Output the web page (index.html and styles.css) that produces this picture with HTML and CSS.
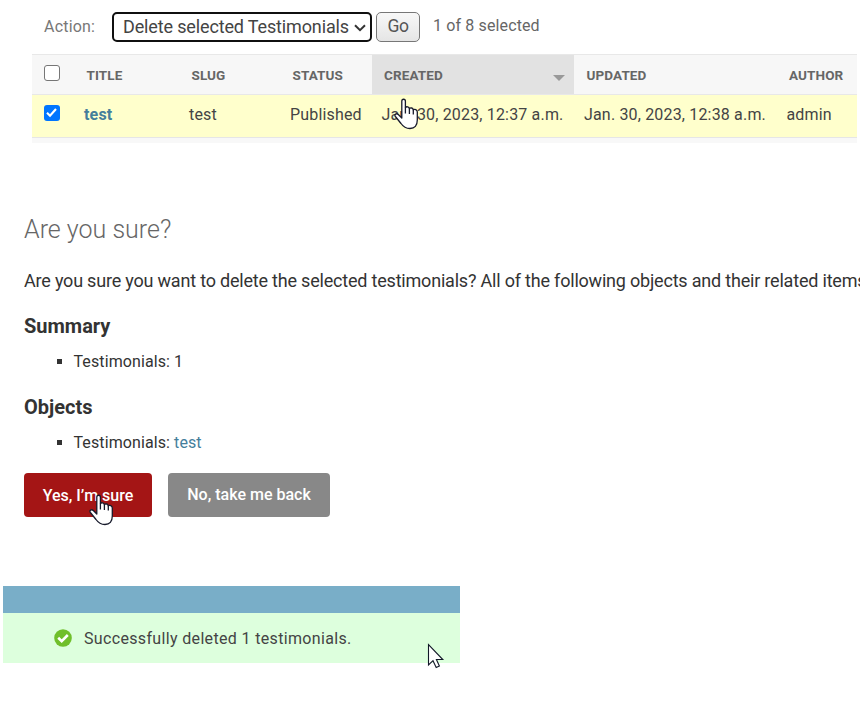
FILE: index.html
```html
<!DOCTYPE html>
<html lang="en">
<head>
<meta charset="utf-8">
<title>Delete testimonials</title>
<link rel="stylesheet" href="styles.css">
</head>
<body>
<svg width="0" height="0" class="defs">
  <symbol id="hand" viewBox="0 0 26 32">
    <path d="M7.8 20V3.2C7.8.6 11.4.6 11.4 3.2V9.6C12.2 8.3 15.2 8.5 15.4 10.6C16.5 9.4 19 9.8 19.3 11.8C20.6 10.8 23.3 11.6 23.3 14V22C23.3 27.3 20.6 30.5 16 30.5C11.5 30.5 9.3 28.8 7 25.5L1.4 18.5C-.2 16.4 2.6 14.9 4.3 16.5Z" fill="#fff" stroke="#171a2b" stroke-width="1.3" stroke-linejoin="round"/>
    <path d="M11.4 9.5V15.5M15.4 10.5V16M19.3 11.8V16.5" fill="none" stroke="#171a2b" stroke-width="1.3"/>
  </symbol>
</svg>
<section class="changelist">
  <div class="actions">
    <span class="label">Action:</span>
    <div class="select"><span>Delete selected Testimonials</span>
      <svg width="12" height="8" viewBox="0 0 12 8"><path d="M1 1.3L6 6.2L11 1.3" fill="none" stroke="#333" stroke-width="2"/></svg>
    </div>
    <button class="go">Go</button>
    <span class="counter">1 of 8 selected</span>
  </div>
  <table>
    <colgroup><col class="c-check"><col class="c-title"><col class="c-slug"><col class="c-status"><col class="c-date"><col class="c-date"><col class="c-author"></colgroup>
    <thead><tr><th class="check"><span class="box"></span></th><th>TITLE</th><th>SLUG</th><th>STATUS</th><th class="sorted"><div><span>CREATED</span><i></i></div></th><th>UPDATED</th><th>AUTHOR</th></tr></thead>
    <tbody><tr><td class="check"><span class="box on"><svg width="15" height="15" viewBox="0 0 15 15"><path d="M3 7.8L6 10.8L12 4" fill="none" stroke="#fff" stroke-width="2.1"/></svg></span></td><td><a class="strong">test</a></td><td>test</td><td>Published</td><td>Jan. 30, 2023, 12:37 a.m.</td><td>Jan. 30, 2023, 12:38 a.m.</td><td>admin</td></tr></tbody>
  </table>
  <div class="next-row"></div>
  <svg class="cursor over-table" width="26" height="32"><use href="#hand"/></svg>
</section>
<section class="confirm">
  <h1>Are you sure?</h1>
  <p>Are you sure you want to delete the selected testimonials? All of the following objects and their related items</p>
  <h2>Summary</h2>
  <ul><li>Testimonials: 1</li></ul>
  <h2>Objects</h2>
  <ul><li>Testimonials: <a>test</a></li></ul>
  <div class="buttons">
    <button class="yes">Yes, I’m sure</button>
    <button class="no">No, take me back</button>
    <svg class="cursor over-yes" width="26" height="32"><use href="#hand"/></svg>
  </div>
</section>
<section class="message">
  <div class="bar"></div>
  <div class="success">
    <svg width="18" height="18" viewBox="0 0 18 18"><circle cx="9" cy="9" r="8.8" fill="#70bf2b"/><path d="M4.2 8.7L7.7 12.1L13.8 6" fill="none" stroke="#fff" stroke-width="2.6"/></svg>
    <span>Successfully deleted 1 testimonials.</span>
  </div>
  <svg class="cursor arrow" width="18" height="27" viewBox="0 0 18 27"><path d="M1.5 1.5V22L6 17.7L9.2 24.6L12.4 23.1L9.4 16.5H15.8Z" fill="#fff" stroke="#111827" stroke-width="1.1"/></svg>
</section>
</body>
</html>
```

FILE: styles.css
```css
* { box-sizing: border-box; }
body { margin: 0; width: 862px; height: 703px; overflow: hidden; background: #fff; color: #333; font-family: Roboto, "Liberation Sans", sans-serif; font-size: 16px; }
.defs { position: absolute; }
.changelist, .buttons, .message { position: relative; }
.cursor { position: absolute; }
.changelist { height: 143px; padding: 12px 0 0 32px; }
.actions { display: flex; height: 42px; padding-left: 12px; color: #666; }
.label { width: 68px; line-height: 29px; color: #777; letter-spacing: .2px; }
.select { display: flex; align-items: center; justify-content: space-between; width: 260px; height: 30px; padding: 0 4px 0 9px; border: 2px solid #101010; border-radius: 5px; color: #444; font-size: 18px; letter-spacing: -.14px; white-space: nowrap; }
.select span { padding-bottom: 2px; }
.select svg { margin-top: 1px; }
.go { width: 44px; height: 30px; margin-left: 4px; padding: 0 0 2px; border: 1px solid #777; border-radius: 5px; background: linear-gradient(#f8f8f8, #e5e5e5); color: #555; font: 17.5px Roboto, sans-serif; letter-spacing: -.5px; }
.counter { margin-left: 13px; line-height: 27px; letter-spacing: .13px; }
table { width: 825px; table-layout: fixed; border-collapse: separate; border-spacing: 0; }
.c-check { width: 42px; }
.c-title { width: 105px; }
.c-slug { width: 101px; }
.c-status { width: 91.5px; }
.c-date { width: 202.5px; }
.c-author { width: 80.5px; }
th, td { text-align: left; white-space: nowrap; }
th { height: 41px; padding: 0 0 0 12.5px; border-top: 1px solid #e8e8e8; border-bottom: 1px solid #e8e8e8; background: #f7f7f7; color: #666; font-size: 13.5px; font-weight: 700; letter-spacing: .1px; }
td { height: 43px; padding: 0 0 3px 10px; border-bottom: 1px solid #e6e6e6; background: #ffc; letter-spacing: .17px; color: #444; }
.sorted { background: #e2e2e2; }
.sorted div { display: flex; justify-content: space-between; align-items: center; padding-right: 9px; }
.sorted i { margin-top: 6px; border: 6px solid transparent; border-top-color: #999; border-bottom: 0; }
th.check { padding: 0 0 4px 12px; }
td.check { padding: 0 0 6px 12px; }
.box { display: block; width: 16px; height: 16px; border: 1px solid #767676; border-radius: 3px; background: #fff; }
.box.on { border: 0; background: #0075ff; }
.box svg { display: block; }
a { color: #447e9b; }
.strong { font-weight: 700; }
.next-row { width: 825px; height: 5px; background: #f8f8f8; }
.over-table { left: 394px; top: 98px; }
.confirm { height: 443px; padding: 72px 0 0 24px; }
h1 { margin: 0; line-height: 30px; color: #666; font-size: 25px; font-weight: 300; }
p { margin: 23px 0 0; width: 836px; overflow: hidden; line-height: 26px; font-size: 18px; letter-spacing: -.2px; white-space: nowrap; }
h2 { margin: 19px 0 0; line-height: 26px; font-size: 20px; font-weight: 700; }
ul { margin: 11px 0 0; padding: 0; list-style: none; }
li { display: flex; align-items: center; gap: 4px; line-height: 23px; padding-left: 33px; letter-spacing: .1px; }
li::before { content: ""; width: 5px; height: 5px; margin-right: 7.5px; background: #333; }
h2 + ul + h2 { margin-top: 21px; }
.buttons { display: flex; gap: 16px; margin-top: 19px; }
.buttons button { height: 44px; padding: 0; border: 0; border-radius: 4px; color: #fff; font: 500 16px Roboto, sans-serif; }
.buttons .no { padding-bottom: 1px; }
.yes { width: 128px; background: #a41515; }
.no { width: 162px; background: #888; }
.over-yes { left: 65px; top: 21px; }
.message { width: 457px; margin-left: 3px; }
.bar { height: 27px; background: #79aec8; }
.success { display: flex; align-items: center; gap: 12px; height: 50px; padding-left: 51px; background: #dfd; letter-spacing: .34px; color: #444; }
.arrow { left: 424px; top: 57px; }
```
